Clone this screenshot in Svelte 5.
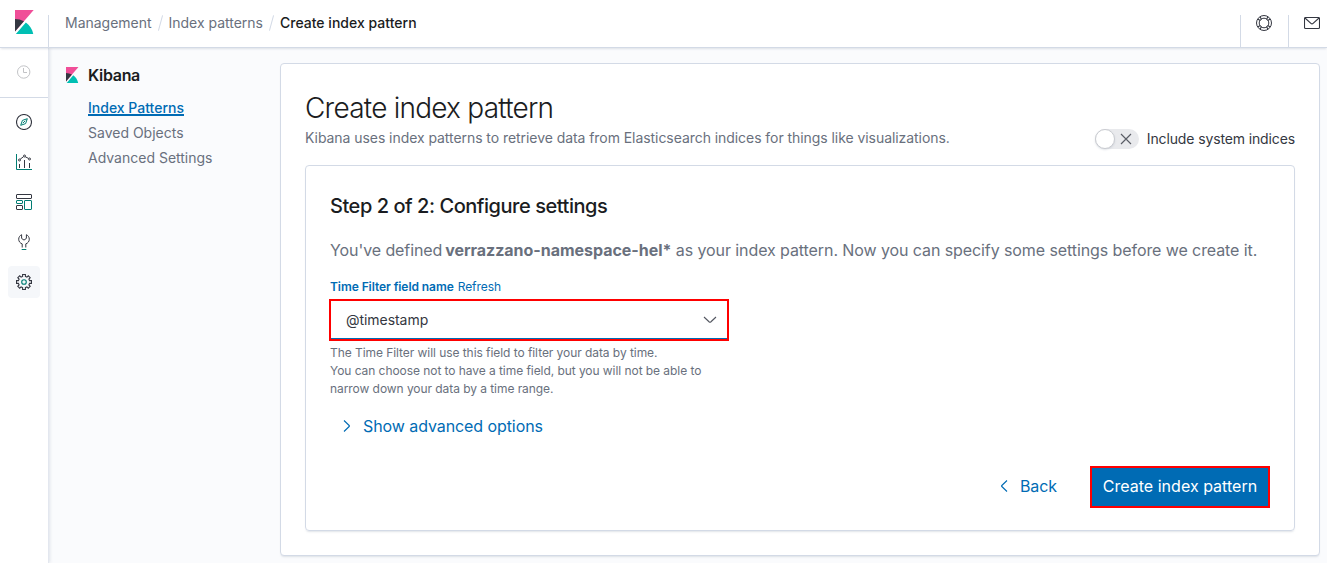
<script>
  const crumbs = ['Management', 'Index patterns'];
  const links = ['Index Patterns', 'Saved Objects', 'Advanced Settings'];
</script>

{#snippet logo(size)}
  <svg width={size} height={size} viewBox="0 0 32 32">
    <path fill="#f04e98" d="M4 0v28.789L28.935.017z" />
    <path fill="#343741" d="M4 12v16.789l11.906-13.738A24.721 24.721 0 0 0 4 12" />
    <path fill="#00bfb3" d="M18.479 16.664 6.268 30.754l-1.073 1.237h23.191c-1.252-6.292-4.883-11.719-9.908-15.327" />
  </svg>
{/snippet}

<div class="app">
  <header>
    <div class="brand">{@render logo(24)}</div>
    <nav class="crumbs">
      {#each crumbs as c}
        <span>{c}</span><i></i>
      {/each}
      <b>Create index pattern</b>
    </nav>
    <div class="tool">
      <svg width="16" height="16" viewBox="0 0 16 16" fill="none" stroke="#343741">
        <circle cx="8" cy="8" r="7.5" /><circle cx="8" cy="8" r="4.8" />
        <path stroke-width="1.1" d="M2 4.200l2.400 1.300M4.200 2l1.300 2.400M14 4.200l-2.400 1.300M11.800 2l-1.300 2.400M2 11.800l2.400-1.300M4.200 14l1.300-2.400M14 11.800l-2.400-1.300M11.800 14l-1.300-2.400" />
      </svg>
    </div>
    <div class="tool">
      <svg width="16" height="16" viewBox="0 0 16 16" fill="none" stroke="#343741">
        <rect x=".5" y="2.500" width="15" height="11" rx="1" stroke-width="1.100" /><path stroke-width="1.100" d="M1 3l5.900 5.400q1.100 1 2.200 0L15 3" />
      </svg>
    </div>
  </header>

  <div class="body">
    <aside class="rail">
      <div class="recent">
        <svg width="14" height="14" viewBox="0 0 14 14" fill="none" stroke="#c2c3c6">
          <circle cx="6.700" cy="7" r="6.200" /><path d="M6.500 3v4.500H10" />
        </svg>
      </div>
      <div class="apps">
        <div>
          <svg width="16" height="16" viewBox="0 0 16 16" fill="none">
            <circle cx="8" cy="8" r="7.500" stroke="#343741" stroke-width="1.100" />
            <path stroke="#017d73" d="M11.300 4.700L9.600 9.600 4.700 11.300 6.400 6.400zM6.800 9.200l2.400-2.400" />
          </svg>
        </div>
        <div>
          <svg width="16" height="16" viewBox="0 0 16 16" fill="none">
            <path stroke="#017d73" d="M.5 0v15.500H16" />
            <path stroke="#343741" d="M3.500 10v4M8.500 6v8M13.500 9v5M4.200 5.200l3.300-2.500M9.300 2.800l3.200 1.600" />
            <g stroke="#343741"><circle cx="3.500" cy="6" r="1" /><circle cx="8.500" cy="2" r="1" /><circle cx="13.500" cy="5" r="1" /></g>
          </svg>
        </div>
        <div>
          <svg width="16" height="16" viewBox="0 0 16 16" fill="none">
            <rect x=".5" y=".5" width="15" height="4" rx=".5" stroke="#343741" />
            <rect x=".5" y="6.500" width="6" height="3" rx=".5" stroke="#017d73" />
            <rect x="8.500" y="6.500" width="7" height="9" rx=".5" stroke="#017d73" />
            <rect x=".5" y="11.500" width="6" height="4" rx=".5" stroke="#343741" />
          </svg>
        </div>
        <div>
          <svg width="16" height="16" viewBox="0 0 16 16" fill="none">
            <path stroke="#343741" d="M6.200 13.500V9.900C4.200 9.200 2.700 7.500 2.700 5.200 2.700 3.200 3.900 1.500 5.600.7V4.400L8 6.100l2.400-1.700V.7c1.700.8 2.900 2.500 2.900 4.500 0 2.300-1.500 4-3.500 4.700v3.600" />
            <path stroke="#017d73" d="M5.700 15.500h4.600" />
          </svg>
        </div>
        <div class="on">
          <svg width="16" height="16" viewBox="0 0 16 16" fill="none">
            <path stroke="#343741" stroke-width="1.100" d="M6.600.5h2.800v1.900l1.500.7 1.400-1.300 1.900 1.900-1.300 1.400.7 1.500h1.900v2.800h-1.900l-.7 1.500 1.300 1.400-1.900 1.900-1.400-1.300-1.500.7v1.900H6.600v-1.900l-1.500-.7-1.400 1.300-1.900-1.900 1.300-1.400-.7-1.500H.5V6.600h1.900l.7-1.500-1.300-1.400 1.900-1.900 1.400 1.300 1.500-.7z" />
            <circle cx="8" cy="8" r="2.300" stroke="#017d73" stroke-width="1.100" />
          </svg>
        </div>
      </div>
    </aside>

    <nav class="side">
      <div class="head">{@render logo(16)}<span>Kibana</span></div>
      {#each links as l, n}
        <a class:active={n === 0}>{l}</a>
      {/each}
    </nav>

    <main>
      <div class="top">
        <div>
          <h1>Create index pattern</h1>
          <p class="lead">Kibana uses index patterns to retrieve data from Elasticsearch indices for things like visualizations.</p>
        </div>
        <div class="switch">
          <div class="track">
            <div class="thumb"></div>
            <svg width="12" height="12" viewBox="0 0 12 12" fill="none" stroke="#5a5d66" stroke-width="1.15"><path d="M1 1l10 10M11 1L1 11" /></svg>
          </div>
          <span>Include system indices</span>
        </div>
      </div>

      <section>
        <h2>Step 2 of 2: Configure settings</h2>
        <p class="intro">You've defined <b>verrazzano-namespace-hel*</b> as your index pattern. Now you can specify some settings before we create it.</p>
        <div class="label"><b>Time Filter field name</b><span>Refresh</span></div>
        <div class="select">
          <span>@timestamp</span>
          <svg width="14" height="8" viewBox="0 0 14 8" fill="none" stroke="#535660" stroke-width="1.100"><path d="M1 1l5.300 5q.7.600 1.400 0L13 1" /></svg>
        </div>
        <div class="help">
          <div>The Time Filter will use this field to filter your data by time.</div>
          <div>You can choose not to have a time field, but you will not be able to</div>
          <div>narrow down your data by a time range.</div>
        </div>
        <div class="adv">
          <svg width="8" height="14" viewBox="0 0 8 14" fill="none" stroke="#006bb4" stroke-width="1.100"><path d="M1 1.500l5.200 5q.5.500 0 1L1 12.500" /></svg>
          <span>Show advanced options</span>
        </div>
        <div class="actions">
          <div class="back">
            <svg width="8" height="14" viewBox="0 0 8 14" fill="none" stroke="#006bb4" stroke-width="1.100"><path d="M7 1.500l-5.200 5q-.5.500 0 1L7 12.500" /></svg>
            <span>Back</span>
          </div>
          <button>Create index pattern</button>
        </div>
      </section>
    </main>
  </div>
</div>

<style>
  :global(body) { overflow: hidden; }
  .app {
    width: 1327px; height: 563px; overflow: hidden; display: flex; flex-direction: column;
    background: #fafbfd; color: #343741; font: 14px/20px Inter, sans-serif; letter-spacing: -0.0035em;
  }
  .app * { box-sizing: border-box; }
  svg { display: block; flex: none; }
  h1, h2, p { margin: 0; white-space: nowrap; }
  header {
    height: 48px; flex: none; display: flex; background: #fff; border-bottom: 1px solid #d3dae6;
    box-shadow: 0 2px 2px -1px rgba(152, 162, 179, .3); position: relative; z-index: 2;
  }
  .brand { width: 48px; padding: 10px 12px; }
  .crumbs {
    flex: 1; margin-top: 15px; padding-left: 16px; border-left: 1px solid #d3dae6;
    display: flex; align-items: flex-start; color: #69707d; white-space: nowrap;
  }
  .crumbs span, .crumbs b { margin-top: -2px; }
  .crumbs span { letter-spacing: -0.001em; }
  .crumbs b { color: #1a1c21; font-weight: 500; letter-spacing: 0.001em; }
  .crumbs i { width: 1px; height: 16px; margin: 0 8px; background: #d3dae6; transform: rotate(15deg); }
  .tool { width: 48px; margin-top: 15px; padding-left: 15px; border-left: 1px solid #d3dae6; }
  .tool:last-child { width: 39px; }
  .body { flex: 1; display: flex; min-height: 0; }
  .rail { width: 49px; background: #fff; border-right: 1px solid #e3e7ef; box-shadow: 1px 0 3px rgba(152, 162, 179, .25); }
  .recent { height: 50px; padding: 17px 0 0 17px; border-bottom: 1px solid #d3dae6; }
  .apps { padding: 8px; display: grid; gap: 8px; }
  .apps div { width: 32px; height: 32px; padding: 8px; border-radius: 4px; }
  .apps .on { background: #f5f7fa; }
  .side { width: 231px; padding: 17px 0 0 15px; display: flex; flex-direction: column; color: #69707d; }
  .head { display: flex; align-items: center; gap: 8px; height: 20px; margin-bottom: 10px; color: #1a1c21; font-size: 16px; font-weight: 600; letter-spacing: -0.02em; }
  .side a { margin-left: 24px; height: 25px; line-height: 25px; letter-spacing: 0; }
  .side .active { color: #006bb4; font-weight: 500; text-decoration: underline; text-decoration-thickness: 1.5px; }
  main {
    width: 1040px; height: 493px; margin-top: 15px; padding: 24px; background: #fff;
    border: 1px solid #d3dae6; border-radius: 4px; box-shadow: 0 2px 2px -1px rgba(152, 162, 179, .3);
  }
  .top { height: 77px; display: flex; justify-content: space-between; align-items: flex-start; }
  h1 { font-size: 28px; line-height: 40px; font-weight: 300; letter-spacing: -0.0275em; color: #1a1c21; }
  .lead { color: #69707d; letter-spacing: -0.0043em; }
  .switch { display: flex; gap: 8px; margin-top: 41px; white-space: nowrap; letter-spacing: -0.009em; }
  .track { width: 44px; height: 20px; border-radius: 10px; background: #e9eaed; display: flex; align-items: center; justify-content: space-between; padding-right: 7px; }
  .thumb { width: 20px; height: 20px; border-radius: 50%; background: #fff; border: 1px solid #c9cbd0; box-shadow: 0 1px 2px rgba(152, 162, 179, .3); }
  section {
    height: 366px; padding: 24px; border: 1px solid #d3dae6; border-radius: 4px;
    box-shadow: 0 2px 2px -1px rgba(152, 162, 179, .3); white-space: nowrap;
  }
  h2 { font-size: 20px; line-height: 32px; font-weight: 500; letter-spacing: -0.0228em; color: #1a1c21; }
  .intro { margin-top: 16px; font-size: 16px; line-height: 24px; color: #69707d; letter-spacing: -0.0055em; }
  .intro b { letter-spacing: -0.002em; margin-left: -1.5px; }
  .label { display: flex; gap: 4px; margin-top: 16px; font-size: 12px; line-height: 18px; color: #006bb4; letter-spacing: -0.006em; }
  .label b { font-weight: 600; }
  .select {
    width: 400px; height: 42px; margin: 3px 0 0 -1px; padding: 0 10px 0 15px; border: 2px solid #f00;
    box-shadow: inset 0 -1px #006bb4; display: flex; align-items: center; justify-content: space-between;
  }
  .help { margin-top: 3px; font-size: 12px; line-height: 18px; color: #69707d; letter-spacing: -0.005em; }
  .adv, .back { display: flex; align-items: center; color: #006bb4; font-size: 16px; line-height: 24px; letter-spacing: -0.005em; }
  .adv { gap: 12px; margin: 16px 0 0 13px; }
  .actions { display: flex; justify-content: flex-end; align-items: center; gap: 33px; margin-top: 28px; }
  .back { gap: 12px; margin-bottom: 2px; }
  button {
    width: 180px; height: 42px; padding: 0 0 2px; border: 2px solid #f00; background: #006bb4; color: #fff;
    font: 16px/24px Inter, sans-serif; letter-spacing: 0.001em;
  }
</style>
